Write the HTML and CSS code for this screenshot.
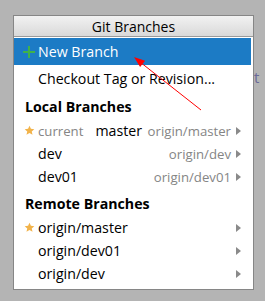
FILE: index.html
```html
<!DOCTYPE html>
<html>
<head>
<meta charset="utf-8">
<link rel="stylesheet" href="styles.css">
</head>
<body>
<div class="screen">
  <span class="under-text">t</span>
  <div class="popup">
    <div class="popup-title">Git Branches</div>
    <div class="list">
      <div class="row action selected">
        <span class="icon"><svg width="12" height="12" viewBox="0 0 12 12"><rect x="5" y="0" width="2" height="12" fill="#3fb24a"/><rect x="0" y="5" width="12" height="2" fill="#3fb24a"/></svg></span>
        <span class="label">New Branch</span>
      </div>
      <div class="row action">
        <span class="icon"></span>
        <span class="label">Checkout Tag or Revision...</span>
      </div>
      <div class="heading">Local Branches</div>
      <div class="row item">
        <span class="icon"><svg class="star" width="11" height="11" viewBox="0 0 24 24"><path d="M12 1.5l3.1 6.9 7.4.7-5.6 5 1.7 7.4L12 17.7l-6.6 3.8 1.7-7.4-5.6-5 7.4-.7z" fill="#f2b34a"/></svg></span>
        <span class="label"><span class="muted current">current</span>master</span>
        <span class="track">origin/master</span>
        <span class="arrow"></span>
      </div>
      <div class="row item">
        <span class="icon"></span>
        <span class="label">dev</span>
        <span class="track">origin/dev</span>
        <span class="arrow"></span>
      </div>
      <div class="row item">
        <span class="icon"></span>
        <span class="label">dev01</span>
        <span class="track">origin/dev01</span>
        <span class="arrow"></span>
      </div>
      <div class="heading">Remote Branches</div>
      <div class="row item">
        <span class="icon"><svg class="star" width="11" height="11" viewBox="0 0 24 24"><path d="M12 1.5l3.1 6.9 7.4.7-5.6 5 1.7 7.4L12 17.7l-6.6 3.8 1.7-7.4-5.6-5 7.4-.7z" fill="#f2b34a"/></svg></span>
        <span class="label">origin/master</span>
        <span class="arrow"></span>
      </div>
      <div class="row item">
        <span class="icon"></span>
        <span class="label">origin/dev01</span>
        <span class="arrow"></span>
      </div>
      <div class="row item">
        <span class="icon"></span>
        <span class="label">origin/dev</span>
        <span class="arrow"></span>
      </div>
    </div>
  </div>
  <svg class="annotation" width="265" height="301" viewBox="0 0 265 301">
    <line x1="201" y1="110" x2="140" y2="62" stroke="#ff0000" stroke-width="1"/>
    <polygon points="134,57 145.1,60.7 140.1,66.9" fill="#ff0000"/>
  </svg>
</div>
</body>
</html>
```
FILE: styles.css
```css
html, body {
  margin: 0;
  padding: 0;
}
body {
  background: #b4b4b4;
  font-family: "Open Sans", "Liberation Sans", sans-serif;
  font-size: 14.2px;
  color: #000;
}
.screen {
  position: relative;
  width: 265px;
  height: 301px;
  overflow: hidden;
  padding-top: 15px;
  box-sizing: border-box;
}
.under-text {
  position: absolute;
  left: 254px;
  top: 67px;
  color: #6a6a98;
  font-size: 15px;
}
.popup {
  position: relative;
  z-index: 1;
  margin-left: 13px;
  width: 241px;
  height: 275px;
  box-sizing: border-box;
  border: 1px solid #868686;
  background: #fff;
}
.popup-title {
  height: 20px;
  line-height: 22px;
  text-align: center;
  font-size: 14px;
  background: linear-gradient(#f2f2f2, #d9d9d9);
  border-bottom: 1px solid #9a9a9a;
}
.list {
  padding-top: 1px;
  padding-right: 2px;
}
.row {
  display: flex;
  align-items: center;
  padding-left: 9px;
  padding-right: 10px;
}
.row.action {
  height: 27px;
}
.row.action + .row.action {
  height: 26px;
}
.row.item {
  height: 23px;
}
.row.selected {
  background: #1c7bc5;
  color: #fff;
}
.icon {
  width: 15px;
  flex: none;
  display: flex;
  align-items: center;
  justify-content: flex-start;
}
.icon .star {
  margin-left: 1px;
}
.label {
  flex: 1;
  white-space: nowrap;
}
.muted {
  color: #858585;
  font-size: 13.2px;
}
.current {
  margin-right: 12px;
}
.track {
  color: #858585;
  font-size: 13.2px;
  margin-right: 5px;
  white-space: nowrap;
}
.arrow {
  flex: none;
  width: 0;
  height: 0;
  border-top: 4px solid transparent;
  border-bottom: 4px solid transparent;
  border-left: 5px solid #8a8a8a;
}
.heading {
  height: 28px;
  padding-top: 3px;
  box-sizing: border-box;
  line-height: 25px;
  padding-left: 11px;
  font-weight: bold;
}
.annotation {
  position: absolute;
  left: 0;
  top: 0;
  z-index: 2;
  pointer-events: none;
}
```
